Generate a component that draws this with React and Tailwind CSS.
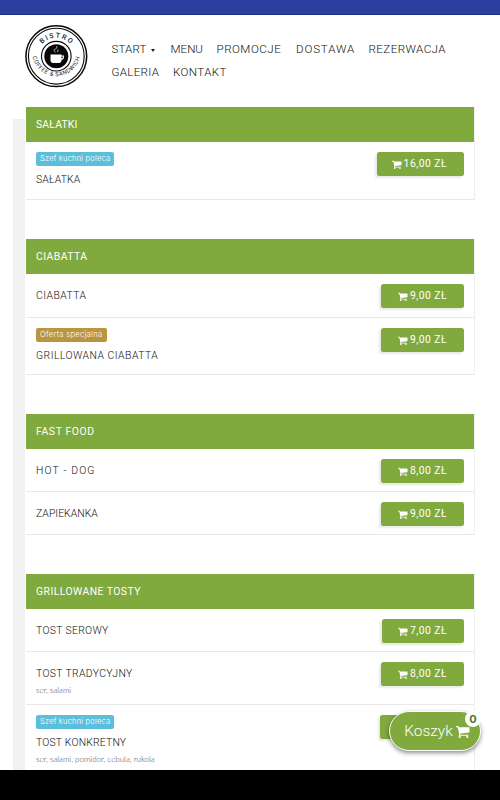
const NAV = [
  { label: "START", caret: true, cls: "w-[59px] tracking-[0.1px]" },
  { label: "MENU", cls: "w-[46px]" },
  { label: "PROMOCJE", cls: "w-[79.5px] tracking-[0.5px]" },
  { label: "DOSTAWA", cls: "w-[72.5px] tracking-[0.85px]" },
  { label: "REZERWACJA", cls: "w-[82px] tracking-[0.42px]" },
  { label: "GALERIA", cls: "w-[61.5px] tracking-[0.3px]" },
  { label: "KONTAKT", cls: "w-[60px] tracking-[0.4px]" },
];

const SECTIONS = [
  {
    title: "SAŁATKI",
    tracking: "tracking-[0.2px]",
    items: [{ name: "SAŁATKA", price: "16,00 ZŁ", badge: "chef", row: "h-[58px]", button: "w-[87px]", tracking: "tracking-[0.17px]" }],
  },
  {
    title: "CIABATTA",
    tracking: "tracking-[0.45px]",
    items: [
      { name: "CIABATTA", price: "9,00 ZŁ", row: "h-11", button: "w-[83px]", tracking: "tracking-[0.45px]" },
      { name: "GRILLOWANA CIABATTA", price: "9,00 ZŁ", badge: "special", row: "h-[57px]", button: "w-[83px]", tracking: "tracking-[0.48px]" },
    ],
  },
  {
    title: "FAST FOOD",
    tracking: "tracking-[0.6px]",
    items: [
      { name: "HOT - DOG", price: "8,00 ZŁ", row: "h-[43px]", button: "w-[83px]", tracking: "tracking-[1.15px]" },
      { name: "ZAPIEKANKA", price: "9,00 ZŁ", row: "h-[43px]", button: "w-[83px]", tracking: "tracking-[0.05px]" },
    ],
  },
  {
    title: "GRILLOWANE TOSTY",
    tracking: "tracking-[0.45px]",
    items: [
      { name: "TOST SEROWY", price: "7,00 ZŁ", row: "h-[43px]", button: "w-[82px]", tracking: "tracking-[0.33px]" },
      { name: "TOST TRADYCYJNY", price: "8,00 ZŁ", info: "ser, salami", row: "h-[53px]", button: "w-[83px]", tracking: "tracking-[0.36px]" },
      { name: "TOST KONKRETNY", price: "9,00 ZŁ", badge: "chef", info: "ser, salami, pomidor, cebula, rukola", row: "h-[74px]", button: "w-[84px]", tracking: "tracking-[0.2px]" },
    ],
  },
];

const BADGES = {
  chef: { label: "Szef kuchni poleca", cls: "w-[78px] tracking-[0.17px] bg-[#5bbfdc]" },
  special: { label: "Oferta specjalna", cls: "w-[71px] tracking-[0.3px] bg-[#bb9440]" },
};

function CartIcon({ className }) {
  return (
    <svg viewBox="64 128 1664 1536" className={className} fill="currentColor">
      <path d="M640 1536q0 52-38 90t-90 38-90-38-38-90 38-90 90-38 90 38 38 90zm896 0q0 52-38 90t-90 38-90-38-38-90 38-90 90-38 90 38 38 90zm128-1088v512q0 24-16.5 42.5t-40.5 21.5l-1044 122q13 60 13 70 0 16-24 64h920q26 0 45 19t19 45-19 45-45 19h-1024q-26 0-45-19t-19-45q0-11 8-31.5t16-36 21.5-40 15.5-29.5l-177-823h-204q-26 0-45-19t-19-45 19-45 45-19h256q16 0 28.5 6.5t19.5 15.5 13 24.5 8 26 5.5 29.5 4.5 26h1201q26 0 45 19t19 45z" />
    </svg>
  );
}

function Logo() {
  return (
    <svg viewBox="0 0 64 64" className="w-16 h-16 shrink-0" fill="none" stroke="#080808">
      <circle cx="32.3" cy="32.2" r="30.4" strokeWidth="1.5" />
      <circle cx="32.3" cy="32.2" r="27.9" strokeWidth="1.1" />
      <circle cx="32.3" cy="32.2" r="14.8" strokeWidth="1.1" />
      <circle cx="32.3" cy="32.2" r="12" fill="#080808" stroke="none" />
      <path d="M26.5 30.5h11v5.8a2.7 2.7 0 0 1-2.7 2.7h-5.6a2.7 2.7 0 0 1-2.7-2.7z" fill="#fff" stroke="none" />
      <path d="M37 32h2.4v1.2q0 2-2.6 2" stroke="#fff" strokeWidth="1.1" />
      <path d="M31.5 28.3q-3-2 .2-3.4 2-1 .9-2.8M33 28.2q2-1 .8-2.6" stroke="#ddd" strokeWidth="0.8" />
      <path id="logo-top" d="M13.8 32.2a18.5 18.5 0 0 1 37 0" stroke="none" />
      <path id="logo-bottom" d="M8.1 30a24.3 24.3 0 0 0 48.4 0" stroke="none" />
      <g fill="#222" stroke="none" fontFamily="Roboto, sans-serif" textAnchor="middle">
        <text fontSize="7" fontWeight="500" letterSpacing="1.5">
          <textPath href="#logo-top" startOffset="51%">BISTRO</textPath>
        </text>
        <text fontSize="5.8" fontWeight="400" letterSpacing="0.5">
          <textPath href="#logo-bottom" startOffset="50%">COFFEE &amp; SANDWICH</textPath>
        </text>
      </g>
    </svg>
  );
}

function MenuRow({ item }) {
  const badge = BADGES[item.badge];
  return (
    <li className={`flex justify-between items-start border-b border-[#e8e8e8] pl-2.5 pr-2.5 pt-[9px] ${item.row}`}>
      <div>
        {badge && (
          <div className={`h-3.5 mt-px rounded-[2px] pl-1 font-[Inter,sans-serif] font-light text-[7.6px] leading-[13px] text-white whitespace-nowrap ${badge.cls}`}>{badge.label}</div>
        )}
        <h3 className={`text-[10.4px] leading-4 font-light text-[#111] whitespace-nowrap ${item.tracking} ${badge ? "mt-[6px]" : "mt-[5px]"}`}>{item.name}</h3>
        {item.info && <p className="font-[Lato,sans-serif] font-light text-[8px] leading-4 text-[#444] whitespace-nowrap">{item.info}</p>}
      </div>
      <button className={`h-6 mt-px rounded-[2.5px] bg-[#80aa3d] text-white flex items-center justify-end pr-[17px] shadow-[-2px_2px_2px_rgba(0,0,0,0.09)] ${item.button}`}>
        <CartIcon className="w-2.5 h-[9px] mt-px mr-[2px]" />
        <span className="text-[10.4px] tracking-[0.45px] leading-4 whitespace-nowrap">{item.price}</span>
      </button>
    </li>
  );
}

export default function App() {
  return (
    <div className="relative w-[500px] h-[800px] overflow-hidden bg-white flex flex-col font-[Roboto,sans-serif]">
      <div className="h-[15px] shrink-0 bg-[#2c3e9e] border-b border-[#1c2d80]" />
      <header className="h-[92px] shrink-0 flex pl-6 pt-[9px]">
        <Logo />
        <nav className="flex flex-wrap content-start w-[350px] ml-[23.5px] pt-[14px]">
          {NAV.map(({ label, caret, cls }) => (
            <a key={label} className={`h-[23px] flex items-center text-[11.6px] font-light text-[#111] ${cls}`}>
              {label}
              {caret && <span className="ml-[5px] mt-px border-x-[2.5px] border-x-transparent border-t-[3px] border-t-[#222]" />}
            </a>
          ))}
        </nav>
      </header>
      <main className="flex h-[663px] shrink-0 overflow-hidden">
        <div className="w-3 ml-[13px] mt-3 bg-[#f1f1f1]" />
        <div className="w-[450px] flex flex-col gap-[39px]">
          {SECTIONS.map(section => (
            <section key={section.title} className="border-r border-[#eee] pl-px">
              <h2 className={`h-[35px] pl-2.5 pt-px flex items-center bg-[#80aa3d] text-[10.4px] text-white ${section.tracking}`}>{section.title}</h2>
              <ul className="-ml-px pl-px">
                {section.items.map(item => <MenuRow key={item.name} item={item} />)}
              </ul>
            </section>
          ))}
        </div>
      </main>
      <footer className="h-[30px] shrink-0 bg-black" />
      <button className="absolute left-[389px] top-[711px] w-[92px] h-10 rounded-full border border-white bg-[#80aa3d] text-white flex items-center pl-3.5 shadow-[0_2px_4px_rgba(0,0,0,0.45)]">
        <span className="text-[15.5px] font-light leading-5 w-[49px]">Koszyk</span>
        <CartIcon className="w-[14px] h-[13px] ml-[3px]" />
        <span className="absolute left-[75px] -top-px w-4 h-4 rounded-full bg-white text-[#55752a] font-[Inter,sans-serif] text-[11px] font-bold leading-4 text-center">0</span>
      </button>
    </div>
  );
}
